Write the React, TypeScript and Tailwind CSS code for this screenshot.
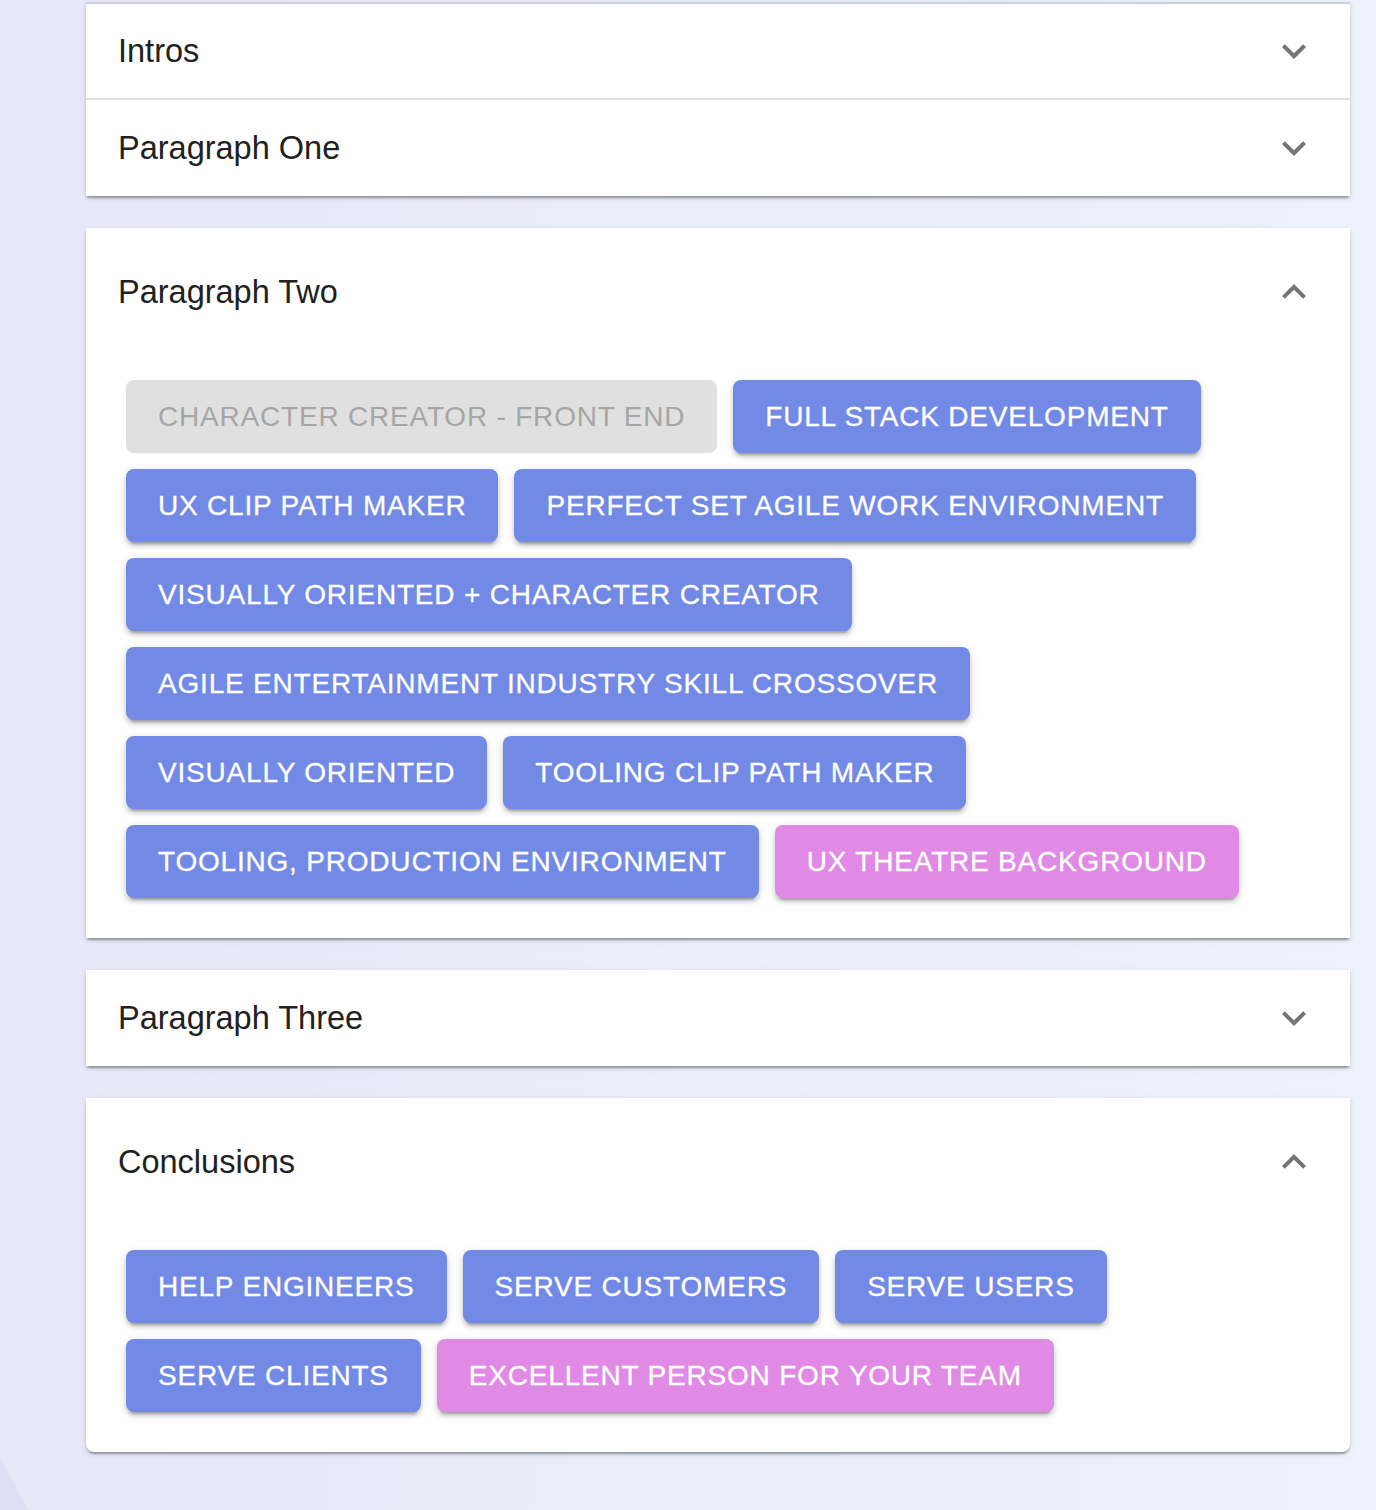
import React from "react";

type Btn = { label: string; kind?: "blue" | "pink" | "disabled" };

const Chevron = ({ up }: { up?: boolean }) => (
  <svg viewBox="0 0 24 24" className="w-12 h-12 shrink-0" fill="#757575">
    {up ? (
      <path d="M12 8l-6 6 1.41 1.41L12 10.83l4.59 4.58L18 14z" />
    ) : (
      <path d="M16.59 8.59L12 13.17 7.41 8.59 6 10l6 6 6-6z" />
    )}
  </svg>
);

const Chip = ({ label, kind = "blue" }: Btn) => {
  const cls =
    kind === "disabled"
      ? "bg-[#e0e0e0] text-[#a6a6a6]"
      : kind === "pink"
      ? "bg-[#e08ae6] text-white shadow-[0_6px_2px_-4px_rgba(0,0,0,0.2),0_4px_4px_0_rgba(0,0,0,0.14),0_2px_10px_0_rgba(0,0,0,0.12)] [-webkit-text-stroke:0.3px_white]"
      : "bg-[#728ae6] text-white shadow-[0_6px_2px_-4px_rgba(0,0,0,0.2),0_4px_4px_0_rgba(0,0,0,0.14),0_2px_10px_0_rgba(0,0,0,0.12)] [-webkit-text-stroke:0.3px_white]";
  return (
    <div
      className={`m-2 h-[73px] px-8 rounded-lg flex items-center text-[28px] leading-[49px] tracking-[0.8px] uppercase whitespace-nowrap ${cls}`}
    >
      {label}
    </div>
  );
};

const Header = ({ title, up, tall }: { title: string; up?: boolean; tall?: boolean }) => (
  <div className={`flex items-center justify-between px-8 ${tall ? "h-[128px]" : "h-[96px]"}`}>
    <span className="text-[32.5px] text-[#212121]">{title}</span>
    <Chevron up={up} />
  </div>
);

const paperShadow =
  "shadow-[0_4px_2px_-2px_rgba(0,0,0,0.2),0_2px_2px_0_rgba(0,0,0,0.14),0_2px_6px_0_rgba(0,0,0,0.12)]";

export default function App() {
  const rowsTwo: Btn[][] = [
    [{ label: "Character Creator - Front End", kind: "disabled" }, { label: "Full Stack Development" }],
    [{ label: "UX Clip Path Maker" }, { label: "Perfect Set Agile Work Environment" }],
    [{ label: "Visually Oriented + Character Creator" }],
    [{ label: "Agile Entertainment Industry Skill Crossover" }],
    [{ label: "Visually Oriented" }, { label: "Tooling Clip Path Maker" }],
    [{ label: "Tooling, Production Environment" }, { label: "UX Theatre Background", kind: "pink" }],
  ];
  const rowsConc: Btn[][] = [
    [{ label: "Help Engineers" }, { label: "Serve Customers" }, { label: "Serve Users" }],
    [{ label: "Serve Clients" }, { label: "Excellent Person for Your Team", kind: "pink" }],
  ];

  return (
    <div
      className="relative w-[1376px] h-[1510px] overflow-hidden bg-gradient-to-r from-[#e8e8f8] to-[#edf2fc]"
      style={{ fontFamily: '"Liberation Sans", Arial, Helvetica, sans-serif' }}
    >
      <div className="pointer-events-none absolute inset-0 bg-[radial-gradient(circle_at_2646px_42px,transparent_3000px,#dde0f5_3002px)]" />
      <div className="relative pl-[86px] pt-[2px] w-[1350px]">
        <div className={`bg-white ${paperShadow}`}>
          <div className="border-t-2 border-[#cfd0d9]">
            <div className="flex items-center justify-between px-8 h-[94px]">
              <span className="text-[32.5px] text-[#212121]">Intros</span>
              <Chevron />
            </div>
          </div>
          <div className="border-t-2 border-[#e0e0e0]">
            <Header title="Paragraph One" />
          </div>
        </div>

        <div className={`mt-8 bg-white ${paperShadow}`}>
          <Header title="Paragraph Two" up tall />
          <div className="pt-4 px-8 pb-8">
            {rowsTwo.map((row, i) => (
              <div key={i} className="flex">
                {row.map((b) => (
                  <Chip key={b.label} {...b} />
                ))}
              </div>
            ))}
          </div>
        </div>

        <div className={`mt-8 bg-white ${paperShadow}`}>
          <Header title="Paragraph Three" />
        </div>

        <div className={`mt-8 bg-white rounded-b-lg ${paperShadow}`}>
          <Header title="Conclusions" up tall />
          <div className="pt-4 px-8 pb-8">
            {rowsConc.map((row, i) => (
              <div key={i} className="flex">
                {row.map((b) => (
                  <Chip key={b.label} {...b} />
                ))}
              </div>
            ))}
          </div>
        </div>
      </div>
    </div>
  );
}
